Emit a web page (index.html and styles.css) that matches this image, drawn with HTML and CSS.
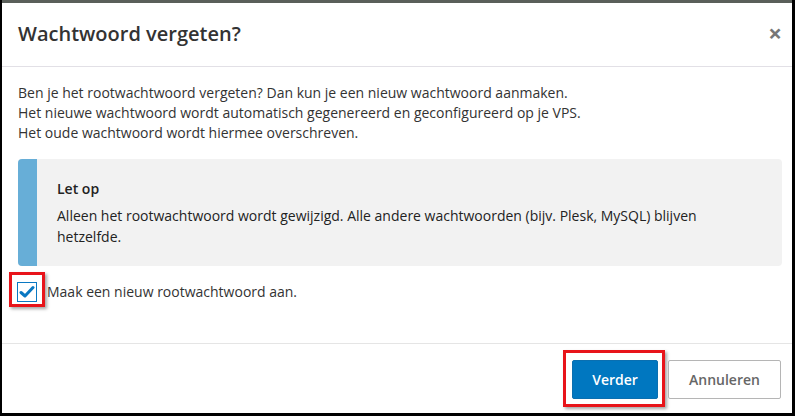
FILE: index.html
```html
<!DOCTYPE html>
<html lang="nl">
<head>
<meta charset="utf-8">
<link rel="stylesheet" href="styles.css">
</head>
<body>
<div class="modal">
  <div class="modal-header">
    <h2 class="title">Wachtwoord vergeten?</h2>
    <span class="close">×</span>
  </div>
  <div class="modal-body">
    <p class="intro">Ben je het rootwachtwoord vergeten? Dan kun je een nieuw wachtwoord aanmaken.<br>Het nieuwe wachtwoord wordt automatisch gegenereerd en geconfigureerd op je VPS.<br>Het oude wachtwoord wordt hiermee overschreven.</p>
    <div class="callout">
      <div class="callout-bar"></div>
      <div class="callout-content">
        <div class="callout-title">Let op</div>
        <div class="callout-text">Alleen het rootwachtwoord wordt gewijzigd. Alle andere wachtwoorden (bijv. Plesk, MySQL) blijven hetzelfde.</div>
      </div>
    </div>
    <label class="check-row">
      <span class="checkbox">
        <svg width="16" height="14" viewBox="0 0 16 14"><path d="M2 7.5 L6 11 L14 2.5" fill="none" stroke="#0a78c2" stroke-width="3" stroke-linecap="round" stroke-linejoin="round"/></svg>
        <span class="hl hl-check"></span>
      </span>
      <span class="check-label">Maak een nieuw rootwachtwoord aan.</span>
    </label>
  </div>
  <div class="modal-footer">
    <button class="btn btn-primary">Verder<span class="hl hl-btn"></span></button>
    <button class="btn btn-default">Annuleren</button>
  </div>
</div>
</body>
</html>
```
FILE: styles.css
```css
html, body {
  margin: 0;
  padding: 0;
  background: #000;
  width: 795px;
  height: 416px;
  overflow: hidden;
}
.modal {
  margin: 0 3px 0 2px;
  height: 410px;
  border-top: 3px solid #5a5f5a;
  background: #fff;
  font-family: "Open Sans", "Liberation Sans", sans-serif;
  color: #333;
  display: flex;
  flex-direction: column;
}
.modal-header {
  height: 63px;
  border-bottom: 1px solid #e2e0e6;
  display: flex;
  align-items: center;
  justify-content: space-between;
  padding: 0 10px 0 16px;
  flex: none;
}
.title {
  margin: 0;
  font-size: 20px;
  font-weight: 600;
  color: #333;
  line-height: 28px;
  padding-bottom: 2px;
}
.close {
  font-size: 24px;
  font-weight: 700;
  color: #777;
  line-height: 22px;
  margin-right: 0;
  padding-bottom: 4px;
}
.modal-body {
  padding: 16px 10px 0 16px;
  height: 277px;
  border-bottom: 1px solid #e5e5e5;
  box-sizing: border-box;
  flex: none;
}
.intro {
  margin: 0;
  font-size: 14px;
  line-height: 20px;
}
.callout {
  margin-top: 16px;
  display: flex;
  background: #f2f2f2;
  border-radius: 4px;
  overflow: hidden;
  height: 107px;
}
.callout-bar {
  width: 19px;
  background: #67aed7;
  flex: none;
}
.callout-content {
  padding: 20px 20px 0 20px;
  font-size: 14px;
}
.callout-title {
  font-weight: 600;
  line-height: 20px;
  color: #222;
}
.callout-text {
  margin-top: 7px;
  line-height: 20.5px;
  color: #222;
}
.check-row {
  display: flex;
  align-items: center;
  margin-top: 16px;
  margin-left: -1px;
  font-size: 14px;
}
.checkbox {
  position: relative;
  width: 18px;
  height: 18px;
  border: 1px solid #0a78c2;
  background: #fff;
  display: flex;
  align-items: center;
  justify-content: center;
  flex: none;
}
.check-label {
  margin-left: 10px;
  line-height: 20px;
}
.hl {
  position: absolute;
  border: 3px solid #e8141a;
  box-shadow: 2px 2px 3px rgba(0,0,0,0.35);
  pointer-events: none;
}
.hl-check {
  left: -9px;
  top: -11px;
  width: 30px;
  height: 29px;
}
.modal-footer {
  flex: 1;
  display: flex;
  justify-content: flex-end;
  align-items: center;
  padding: 1px 11px 0 16px;
  gap: 10px;
}
.btn {
  position: relative;
  font-family: "Open Sans", "Liberation Sans", sans-serif;
  font-size: 14px;
  border-radius: 2px;
  height: 39px;
  padding: 0;
  cursor: pointer;
}
.btn-primary {
  width: 86px;
  background: #0077c0;
  color: #fff;
  font-weight: 600;
  border: 1px solid #0a6fb0;
}
.btn-default {
  width: 113px;
  background: #fff;
  color: #666;
  font-weight: 600;
  border: 1px solid #b5b5b5;
}
.hl-btn {
  left: -10px;
  top: -11px;
  width: 96px;
  height: 51px;
}
```
